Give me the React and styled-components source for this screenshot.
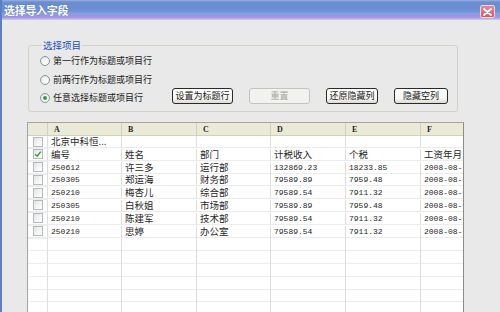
import React from 'react'
import styled, { createGlobalStyle } from 'styled-components'

const GlobalStyle = createGlobalStyle`
  html, body {
    margin: 0;
    padding: 0;
    overflow: hidden;
    background: #e9e9e9;
  }
  body {
    font-family: "Noto Sans CJK SC", "Noto Sans", sans-serif;
    color: #1a1a1a;
  }
`

const columns = '20px 74px 75px 74px 75px 75px 75px'

const Window = styled.div`
  width: 500px;
  height: 312px;
  overflow: hidden;
  border-left: 2px solid #5b7fc6;
  box-sizing: border-box;
  background: #e9e9e9;
  display: flex;
  flex-direction: column;
`

const TitleBar = styled.div`
  height: 20px;
  flex: none;
  margin-left: -2px;
  display: flex;
  align-items: center;
  justify-content: space-between;
  padding: 0 5px 0 4px;
  background: linear-gradient(
    to bottom,
    #a8b9de 0,
    #7a98d4 1px,
    #6a8ccf 3px,
    #6d91d5 11px,
    #86a4e2 14px,
    #9e90e6 15px,
    #a797ea 18px,
    #c4c6e4 19px,
    #c4c6e4 20px
  );
`

const Title = styled.span`
  color: #ffffff;
  font-size: 11px;
  font-weight: 700;
  line-height: 14px;
  letter-spacing: -0.3px;
  text-shadow: 0 0 1px rgba(40, 60, 120, 0.6);
`

const CloseButton = styled.div`
  width: 15px;
  height: 13px;
  margin-top: 3px;
  border-radius: 2px;
  border: 1px solid #f2d4d8;
  box-sizing: border-box;
  background: linear-gradient(to bottom, #e48a96, #cc5c6c);
  display: flex;
  align-items: center;
  justify-content: center;
`

const Body = styled.div`
  flex: 1;
  padding-left: 26px;
  min-height: 0;
`

const Group = styled.fieldset`
  width: 430px;
  box-sizing: border-box;
  margin: 19px 0 0 0;
  padding: 0 9px 4px 11px;
  border: 1px solid #d2d2c6;
  border-radius: 3px;
`

const Legend = styled.legend`
  padding: 0 1px;
  margin-left: 2px;
  color: #1d4fb4;
  font-size: 9.5px;
  line-height: 12px;
`

const RadioRow = styled.div`
  height: ${p => p.$h || 19}px;
  display: flex;
  align-items: center;
`

const Radio = styled.span`
  width: 10px;
  height: 10px;
  box-sizing: border-box;
  border-radius: 50%;
  border: 1px solid #8796a6;
  background: radial-gradient(circle at 60% 65%, #ffffff 0, #f2f2ee 50%, #d8d8d2 100%);
  display: flex;
  align-items: center;
  justify-content: center;
  margin-right: 3px;
  flex: none;

  &::after {
    content: '';
    width: 4px;
    height: 4px;
    border-radius: 50%;
    background: ${p => (p.$checked ? '#3c9b3c' : 'transparent')};
  }
`

const RadioText = styled.span`
  font-size: 9px;
  line-height: 12px;
  color: #1a1a1a;
  white-space: nowrap;
`

const ButtonBar = styled.div`
  margin-left: auto;
  align-self: flex-start;
  margin-top: -1px;
  display: flex;
  gap: 16px;
`

const Button = styled.div`
  width: ${p => p.$w}px;
  height: 16px;
  box-sizing: border-box;
  border: 1px solid ${p => (p.$disabled ? '#c4c4bc' : '#2a2a2a')};
  border-radius: 3px;
  background: ${p =>
    p.$disabled
      ? '#f2f2f0'
      : 'linear-gradient(to bottom, #ffffff 0, #f4f4f0 70%, #dcdcd4 100%)'};
  color: ${p => (p.$disabled ? '#a8a8a0' : '#1a1a1a')};
  font-size: 9px;
  line-height: 14px;
  text-align: center;
  white-space: nowrap;
`

const Sheet = styled.div`
  margin-top: 10px;
  margin-left: -1px;
  width: 437px;
  height: 200px;
  box-sizing: border-box;
  overflow: hidden;
  border: 1px solid #a4a4a0;
  border-right-color: #8c8c88;
  background: #ffffff;
`

const Row = styled.div`
  display: grid;
  grid-template-columns: ${columns};
  height: ${p => (p.$header ? 13 : 12.8)}px;
  background: ${p => (p.$header ? '#ebead6' : '#ffffff')};
`

const Cell = styled.div`
  box-sizing: border-box;
  min-width: 0;
  border-right: 1px solid ${p => (p.$header ? '#cfcfc2' : '#dedede')};
  border-bottom: 1px solid ${p => (p.$header ? '#cfcfc2' : '#ececec')};
  padding-left: ${p => (p.$header ? 6 : 3)}px;
  white-space: nowrap;
  display: flex;
  align-items: center;
  line-height: 11px;
  font-family: ${p =>
    p.$header
      ? '"Liberation Serif", serif'
      : p.$mono
      ? '"Liberation Mono", monospace'
      : '"Noto Sans CJK SC", sans-serif'};
  font-weight: ${p => (p.$header ? 700 : 400)};
  font-size: ${p => (p.$header ? 8 : p.$mono ? 8 : 9.5)}px;
  color: #262626;
`

const CheckCell = styled.div`
  box-sizing: border-box;
  border-right: 1px solid ${p => (p.$header ? '#cfcfc2' : '#dedede')};
  border-bottom: 1px solid ${p => (p.$header ? '#cfcfc2' : '#ececec')};
  display: flex;
  align-items: center;
  justify-content: center;
`

const Check = styled.span`
  width: 10px;
  height: 10px;
  box-sizing: border-box;
  border: 1px solid #b4bac2;
  background: linear-gradient(135deg, #e2e2de 0, #f6f6f4 60%, #ffffff 100%);
  display: flex;
  align-items: center;
  justify-content: center;
`

const letters = ['A', 'B', 'C', 'D', 'E', 'F']

const rows = [
  { checked: false, cells: ['北京中科恒...', '', '', '', '', ''] },
  { checked: true, cells: ['编号', '姓名', '部门', '计税收入', '个税', '工资年月'] },
  { cells: ['250612', '许三多', '运行部', '132869.23', '18233.85', '2008-08-01'] },
  { cells: ['250305', '郑运海', '财务部', '79589.89', '7959.48', '2008-08-01'] },
  { cells: ['250210', '梅杏儿', '综合部', '79589.54', '7911.32', '2008-08-01'] },
  { cells: ['250305', '白秋姐', '市场部', '79589.89', '7959.48', '2008-08-01'] },
  { cells: ['250210', '陈建军', '技术部', '79589.54', '7911.32', '2008-08-01'] },
  { cells: ['250210', '思婷', '办公室', '79589.54', '7911.32', '2008-08-01'] },
]

const isNumeric = v => /^[0-9.\-]+$/.test(v)

const CloseIcon = () => (
  <svg width="9" height="8" viewBox="0 0 9 8">
    <path d="M1 1 L8 7 M8 1 L1 7" stroke="#ffffff" strokeWidth="1.8" strokeLinecap="round" />
  </svg>
)

const Tick = () => (
  <svg width="8" height="8" viewBox="0 0 8 8">
    <path d="M1.2 4.2 L3.2 6.2 L6.8 1.6" stroke="#3c9b3c" strokeWidth="1.5" fill="none" />
  </svg>
)

const App = () => {
  return (
    <>
      <GlobalStyle />
      <Window>
        <TitleBar>
          <Title>选择导入字段</Title>
          <CloseButton>
            <CloseIcon />
          </CloseButton>
        </TitleBar>
        <Body>
          <Group>
            <Legend>选择项目</Legend>
            <RadioRow>
              <Radio />
              <RadioText>第一行作为标题或项目行</RadioText>
            </RadioRow>
            <RadioRow>
              <Radio />
              <RadioText>前两行作为标题或项目行</RadioText>
            </RadioRow>
            <RadioRow $h={18}>
              <Radio $checked />
              <RadioText>任意选择标题或项目行</RadioText>
              <ButtonBar>
                <Button $w={61}>设置为标题行</Button>
                <Button $w={61} $disabled>重置</Button>
                <Button $w={52}>还原隐藏列</Button>
                <Button $w={54}>隐藏空列</Button>
              </ButtonBar>
            </RadioRow>
          </Group>
          <Sheet>
            <Row $header>
              <CheckCell $header />
              {letters.map(l => (
                <Cell key={l} $header>{l}</Cell>
              ))}
            </Row>
            {rows.map((r, i) => (
              <Row key={i}>
                <CheckCell>
                  <Check>{r.checked && <Tick />}</Check>
                </CheckCell>
                {r.cells.map((c, j) => (
                  <Cell key={j} $mono={isNumeric(c)}>{c}</Cell>
                ))}
                <Cell />
              </Row>
            ))}
            {Array.from({ length: 7 }).map((_, i) => (
              <Row key={'e' + i}>
                <CheckCell />
                {letters.map(l => (
                  <Cell key={l} />
                ))}
              </Row>
            ))}
          </Sheet>
        </Body>
      </Window>
    </>
  )
}

export default App
